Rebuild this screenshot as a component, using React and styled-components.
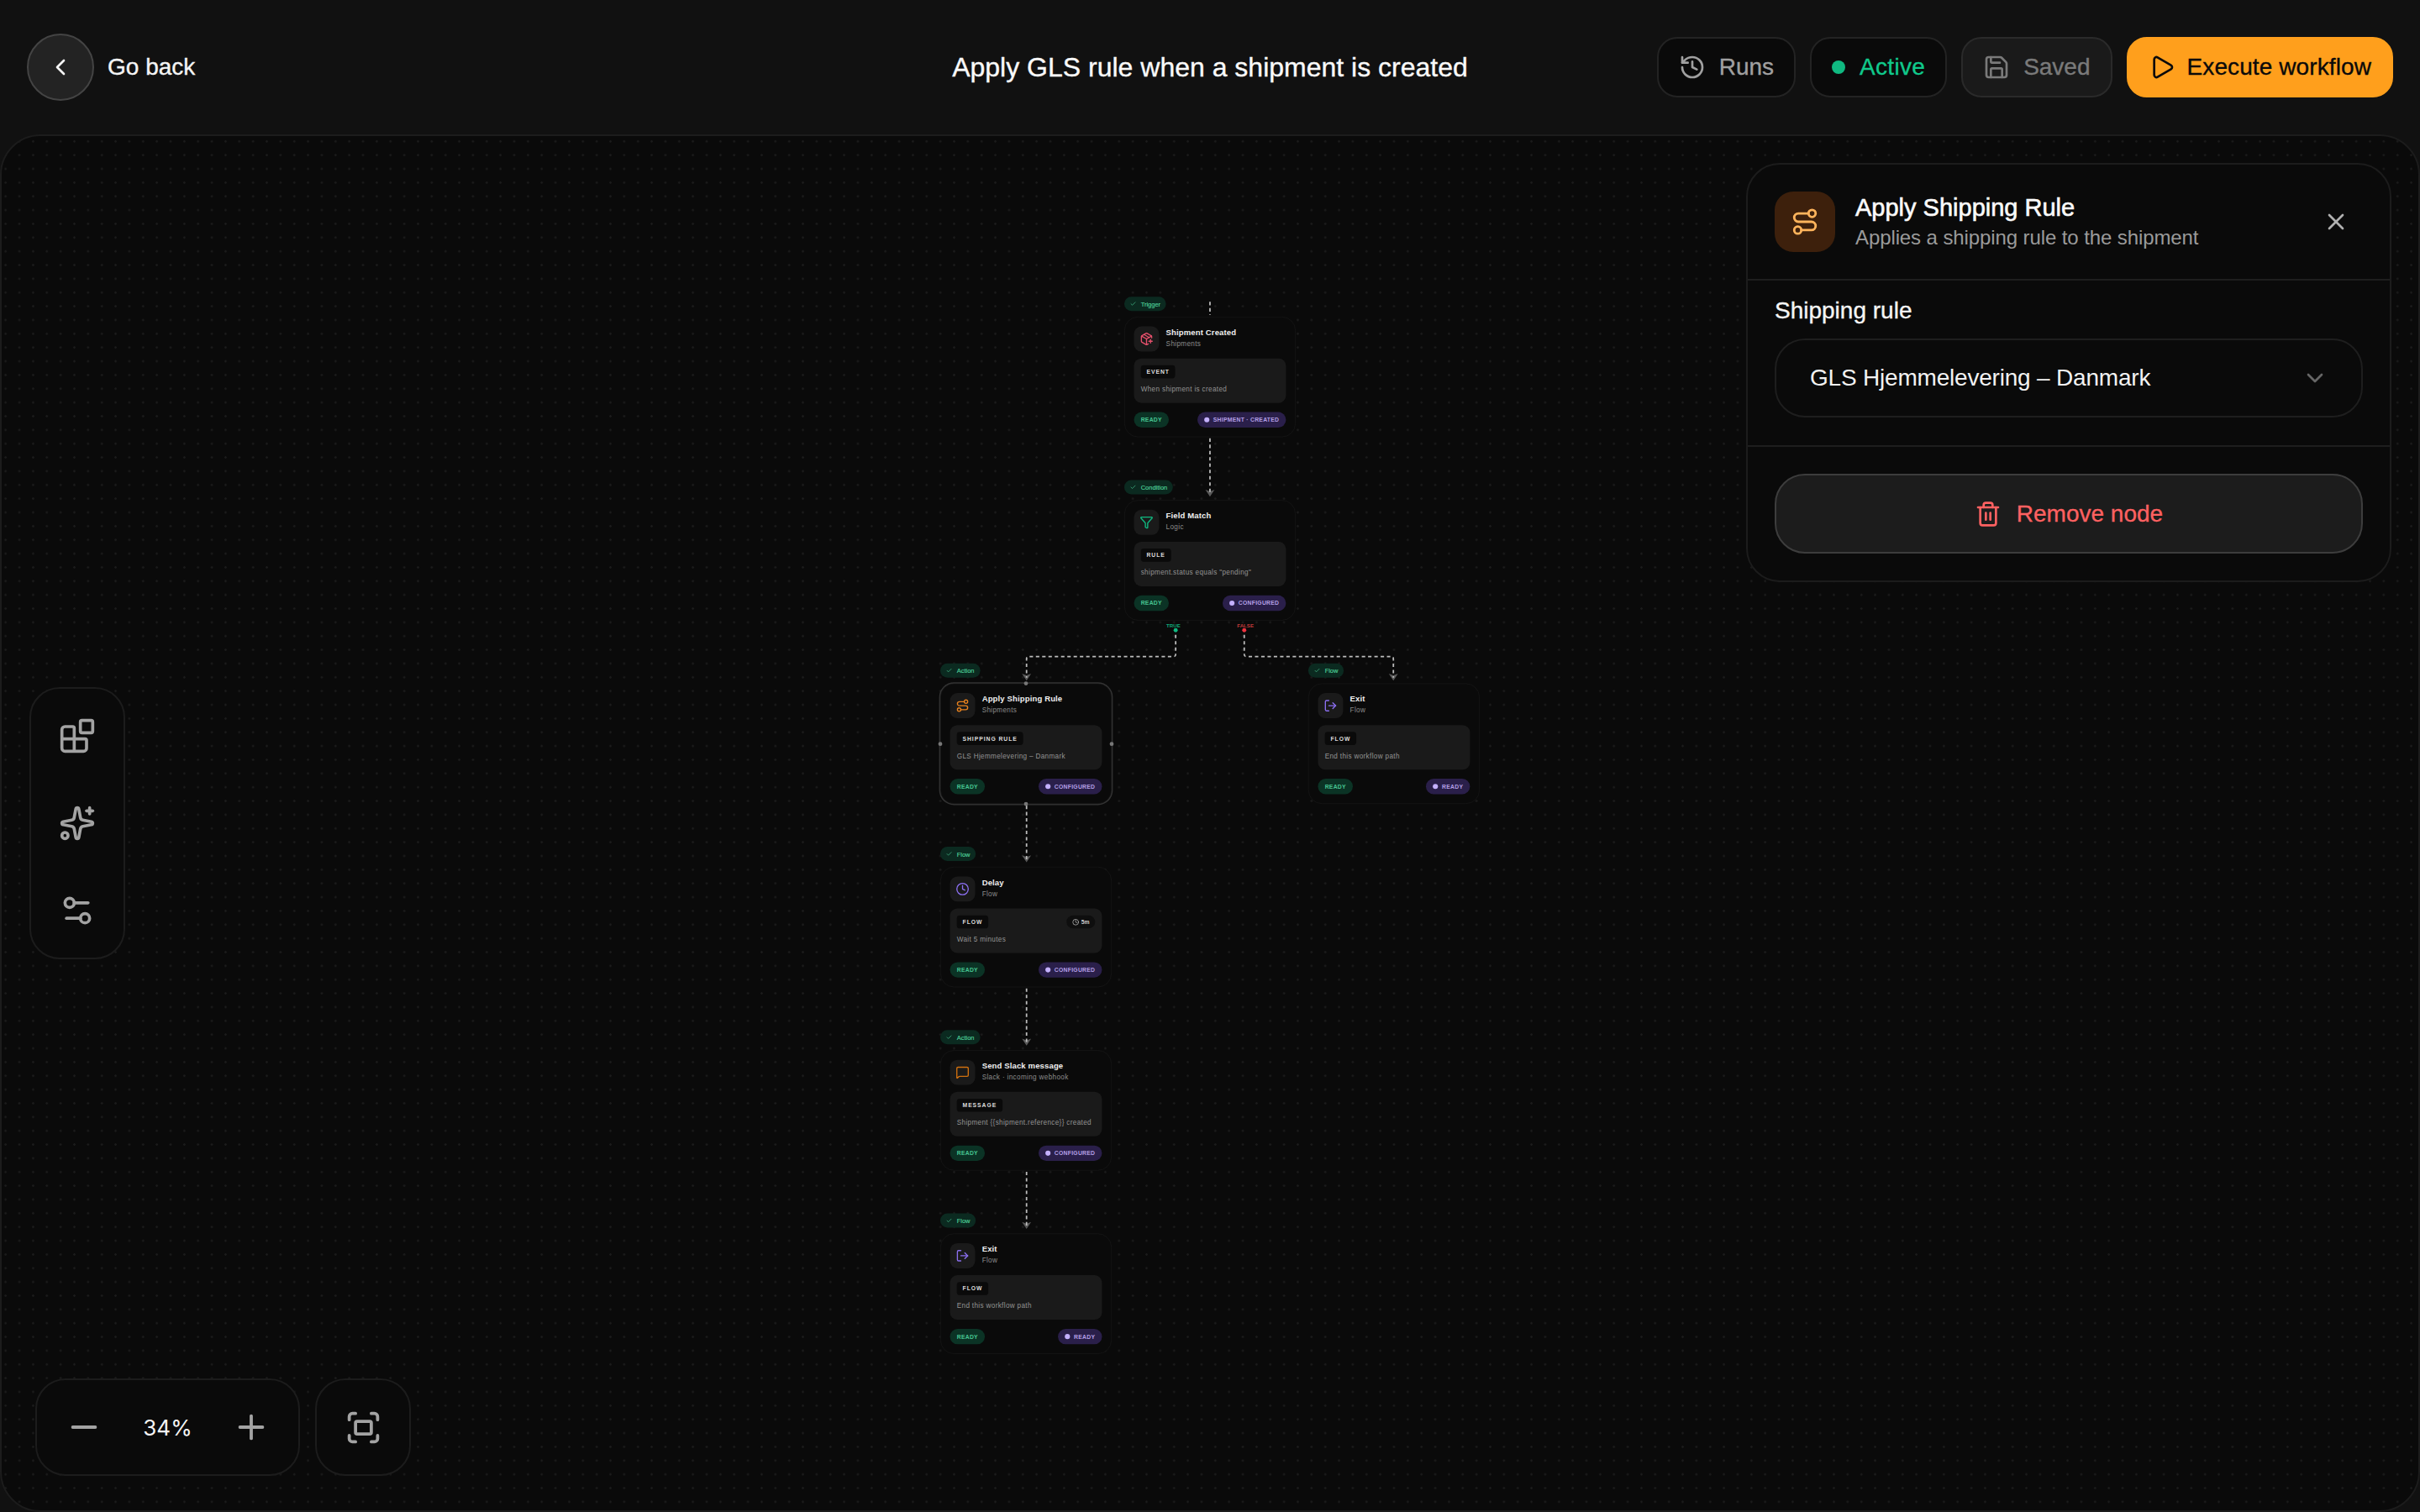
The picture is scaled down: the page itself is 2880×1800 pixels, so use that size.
import React from 'react';
import styled, { createGlobalStyle } from 'styled-components';
import {
  Blocks, Check, ChevronDown, ChevronLeft, Clock, Filter, Fullscreen, History, LogOut,
  MessageSquare, Minus, PackagePlus, Play, Plus, Route, Save, Settings2, Sparkles, Trash2, X,
} from 'lucide-react';

const GlobalStyle = createGlobalStyle`
  html, body, #root {
    margin: 0;
    height: 100%;
    background: #111111;
  }
  body {
    font-family: "Liberation Sans", Arial, sans-serif;
    color: #f5f5f5;
    overflow: hidden;
  }
  * {
    box-sizing: border-box;
  }
`;

const nodes = [
  { id: 'created', x: 322, y: 0, tag: 'Trigger', Icon: PackagePlus, color: '#e5506c', title: 'Shipment Created', sub: 'Shipments', chip: 'EVENT', text: 'When shipment is created', status: 'SHIPMENT · CREATED' },
  { id: 'match', x: 322, y: 321, tag: 'Condition', Icon: Filter, color: '#10b981', title: 'Field Match', sub: 'Logic', chip: 'RULE', text: 'shipment.status equals "pending"', status: 'CONFIGURED' },
  { id: 'apply', x: 0, y: 642, tag: 'Action', Icon: Route, color: '#e8821e', title: 'Apply Shipping Rule', sub: 'Shipments', chip: 'SHIPPING RULE', text: 'GLS Hjemmelevering – Danmark', status: 'CONFIGURED', selected: true },
  { id: 'exit-a', x: 644, y: 642, tag: 'Flow', Icon: LogOut, color: '#8b6ff0', title: 'Exit', sub: 'Flow', chip: 'FLOW', text: 'End this workflow path', status: 'READY' },
  { id: 'delay', x: 0, y: 963, tag: 'Flow', Icon: Clock, color: '#8b6ff0', title: 'Delay', sub: 'Flow', chip: 'FLOW', text: 'Wait 5 minutes', status: 'CONFIGURED', duration: '5m' },
  { id: 'slack', x: 0, y: 1284, tag: 'Action', Icon: MessageSquare, color: '#d0700f', title: 'Send Slack message', sub: 'Slack · incoming webhook', chip: 'MESSAGE', text: 'Shipment {{shipment.reference}} created', status: 'CONFIGURED' },
  { id: 'exit-b', x: 0, y: 1605, tag: 'Flow', Icon: LogOut, color: '#8b6ff0', title: 'Exit', sub: 'Flow', chip: 'FLOW', text: 'End this workflow path', status: 'READY' },
];

const edges = [
  { d: 'M472 -26 V-3' },
  { d: 'M472 213 V310', arrow: [472, 313] },
  { d: 'M412 557 V591 Q412 595 408 595 H155 Q151 595 151 599 V632', arrow: [151, 635] },
  { d: 'M532 557 V591 Q532 595 536 595 H789 Q793 595 793 599 V632', arrow: [793, 635] },
  { d: 'M151 856 V950', arrow: [151, 953] },
  { d: 'M151 1176 V1271', arrow: [151, 1274] },
  { d: 'M151 1497 V1592', arrow: [151, 1595] },
];

const Page = styled.div`
  height: 100vh;
  display: flex;
  flex-direction: column;
`;

const Header = styled.header`
  height: 160px;
  flex-shrink: 0;
  padding: 0 32px;
  display: grid;
  grid-template-columns: 1fr auto 1fr;
  align-items: center;
`;

const BackLink = styled.div`
  display: flex;
  align-items: center;
  gap: 16px;
  font-size: 28px;
  color: #f5f5f5;
  -webkit-text-stroke: 0.35px #f5f5f5;
`;

const BackCircle = styled.button`
  width: 80px;
  height: 80px;
  padding: 0;
  border-radius: 50%;
  border: 2px solid #444444;
  background: #232323;
  color: #f5f5f5;
  display: flex;
  align-items: center;
  justify-content: center;
`;

const PageTitle = styled.h1`
  margin: 0;
  font-size: 32px;
  font-weight: 400;
  color: #fafafa;
  -webkit-text-stroke: 0.35px #fafafa;
`;

const Actions = styled.div`
  display: flex;
  justify-content: flex-end;
  gap: 17px;
`;

const HeaderButton = styled.button`
  height: 72px;
  padding: 0 24px;
  display: flex;
  align-items: center;
  gap: ${(p) => p.$gap || 16}px;
  border-radius: 24px;
  border: 2px solid ${(p) => p.$border || '#232323'};
  background: ${(p) => p.$bg || '#0a0a0a'};
  color: ${(p) => p.$color || '#a0a0a0'};
  font-family: inherit;
  font-size: 28px;
  letter-spacing: ${(p) => p.$spacing || 0}px;
  -webkit-text-stroke: 0.35px ${(p) => p.$color || '#a0a0a0'};
`;

const StatusDot = styled.span`
  width: 16px;
  height: 16px;
  border-radius: 50%;
  background: #10b981;
`;

const Canvas = styled.main`
  flex: 1;
  position: relative;
  overflow: hidden;
  border: 2px solid #1c1c1c;
  border-radius: 48px;
  background-color: #0a0a0a;
  background-image: radial-gradient(circle, #1b1b1b 1.1px, transparent 1.5px);
  background-size: 16.37px 16.37px;
  background-position: -3.5px -1.9px;
`;

const Viewport = styled.div`
  position: absolute;
  left: 1117px;
  top: 214.5px;
  width: 944px;
  height: 1815px;
  transform: scale(0.68);
  transform-origin: 0 0;
`;

const EdgeLayer = styled.svg`
  position: absolute;
  left: 0;
  top: 0;
  overflow: visible;
`;

const EdgeLabel = styled.text`
  font-family: "Liberation Sans", Arial, sans-serif;
  font-size: 9px;
  font-weight: 700;
  text-anchor: middle;
  fill: ${(p) => p.$color};
`;

const NodeCard = styled.article`
  position: absolute;
  left: ${(p) => p.$x}px;
  top: ${(p) => p.$y}px;
  width: 300px;
  padding: 16px;
  display: flex;
  flex-direction: column;
  border: 1px solid #191919;
  border-radius: 24px;
  background: #0a0a0a;
  box-shadow: ${(p) => (p.$selected ? '0 0 0 2px #333333' : 'none')};
`;

const NodeTag = styled.div`
  position: absolute;
  left: -1px;
  top: -36px;
  height: 25px;
  padding: 0 10px;
  display: flex;
  align-items: center;
  gap: 8px;
  border-radius: 13px;
  background: #0b2a20;
  color: #4fd39b;
  font-size: 11px;
  -webkit-text-stroke: 0.2px #4fd39b;
`;

const NodeHead = styled.div`
  display: flex;
  gap: 12px;
  margin-bottom: 12px;
`;

const IconTile = styled.div`
  width: 44px;
  height: 44px;
  flex-shrink: 0;
  display: flex;
  align-items: center;
  justify-content: center;
  border-radius: 13px;
  background: #1a1a1a;
  color: ${(p) => p.$color};
`;

const NodeTitle = styled.div`
  font-size: 14px;
  font-weight: 700;
  line-height: 20px;
  letter-spacing: 0.2px;
  color: #f0f0f0;
`;

const NodeSub = styled.div`
  font-size: 12px;
  line-height: 20px;
  letter-spacing: 0.5px;
  color: #8c8c8c;
`;

const NodeBody = styled.div`
  padding: 12px;
  margin-bottom: 16px;
  border-radius: 13px;
  background: #1a1a1a;
`;

const BodyTop = styled.div`
  display: flex;
  align-items: center;
  justify-content: space-between;
  margin-bottom: 8px;
`;

const Chip = styled.span`
  height: 23px;
  padding: 0 10px;
  display: flex;
  align-items: center;
  border-radius: 5px;
  background: #0a0a0a;
  color: #dddddd;
  font-size: 10px;
  font-weight: 700;
  letter-spacing: 1.4px;
`;

const DurationChip = styled.span`
  height: 23px;
  padding: 0 10px;
  display: flex;
  align-items: center;
  gap: 4px;
  border-radius: 12px;
  background: #0e0e0e;
  color: #cfcfcf;
  font-size: 10px;
  font-weight: 700;
`;

const BodyText = styled.div`
  font-size: 12px;
  line-height: 23px;
  letter-spacing: 0.5px;
  color: #949494;
  white-space: nowrap;
`;

const NodeFoot = styled.div`
  display: flex;
  justify-content: space-between;
`;

const Pill = styled.span`
  height: 27px;
  padding: 0 12px;
  display: flex;
  align-items: center;
  gap: 7px;
  border-radius: 14px;
  background: ${(p) => p.$bg};
  color: ${(p) => p.$color};
  font-size: 10px;
  font-weight: 700;
  letter-spacing: 0.4px;
  white-space: nowrap;
`;

const PillDot = styled.span`
  width: 9px;
  height: 9px;
  border-radius: 50%;
  background: #c4b0ff;
`;

const Handle = styled.span`
  position: absolute;
  width: 7px;
  height: 7px;
  border-radius: 50%;
  background: #777777;
  left: ${(p) => p.$left};
  top: ${(p) => p.$top};
  transform: translate(-50%, -50%);
`;

const Floating = styled.div`
  position: absolute;
  border: 2px solid #1c1c1c;
  background: #0a0a0a;
  border-radius: 36px;
`;

const ToolPalette = styled(Floating)`
  left: 33px;
  top: 656px;
  width: 114px;
  padding: 34px 0;
  display: flex;
  flex-direction: column;
  align-items: center;
  gap: 60px;
  color: #a3a3a3;
`;

const ZoomDock = styled.div`
  position: absolute;
  left: 40px;
  bottom: 41px;
  display: flex;
  gap: 18px;
`;

const ZoomGroup = styled(Floating)`
  position: static;
  width: 315px;
  height: 116px;
  padding: 0 33px;
  display: flex;
  align-items: center;
  justify-content: space-between;
  color: #a3a3a3;
`;

const FitButton = styled(Floating)`
  position: static;
  width: 114px;
  height: 116px;
  display: flex;
  align-items: center;
  justify-content: center;
  color: #a3a3a3;
`;

const ZoomValue = styled.span`
  font-family: Inter, "Liberation Sans", sans-serif;
  font-size: 26px;
  color: #f5f5f5;
`;

const SidePanel = styled(Floating)`
  right: 32px;
  top: 32px;
  width: 768px;
  border-radius: 40px;
`;

const PanelHeader = styled.div`
  padding: 32px;
  display: flex;
  align-items: center;
  gap: 24px;
  border-bottom: 2px solid #1e1e1e;
`;

const PanelIcon = styled.div`
  width: 72px;
  height: 72px;
  flex-shrink: 0;
  display: flex;
  align-items: center;
  justify-content: center;
  border-radius: 22px;
  background: #3d200c;
  color: #ffb45c;
`;

const PanelHeading = styled.div`
  flex: 1;
`;

const PanelTitle = styled.div`
  font-size: 29px;
  line-height: 38px;
  color: #fafafa;
  -webkit-text-stroke: 0.6px #fafafa;
`;

const PanelSub = styled.div`
  font-size: 24px;
  line-height: 34px;
  letter-spacing: -0.1px;
  color: #9a9a9a;
`;

const CloseButton = styled.button`
  padding: 0;
  margin-right: 16px;
  border: none;
  background: none;
  color: #b0b0b0;
  display: flex;
`;

const PanelSection = styled.div`
  padding: 18px 32px 33px;
  border-bottom: 2px solid #1e1e1e;
`;

const FieldLabel = styled.div`
  font-size: 28px;
  line-height: 36px;
  margin-bottom: 15px;
  color: #f5f5f5;
  -webkit-text-stroke: 0.35px #f5f5f5;
`;

const SelectBox = styled.div`
  height: 94px;
  padding: 0 39px 0 40px;
  display: flex;
  align-items: center;
  justify-content: space-between;
  border: 2px solid #1e1e1e;
  border-radius: 36px;
  font-size: 28px;
  letter-spacing: -0.2px;
  color: #f2f2f2;
  svg {
    color: #666666;
  }
`;

const RemoveSection = styled.div`
  padding: 32px;
`;

const RemoveButton = styled.button`
  width: 100%;
  height: 95px;
  display: flex;
  align-items: center;
  justify-content: center;
  gap: 18px;
  border: 2px solid #3d3d3d;
  border-radius: 36px;
  background: #1c1c1c;
  color: #ff6161;
  font-family: inherit;
  font-size: 28px;
  -webkit-text-stroke: 0.3px #ff6161;
`;

const FlowNode = ({ node }) => {
  const { Icon } = node;
  return (
    <NodeCard $x={node.x} $y={node.y} $selected={node.selected}>
      <NodeTag>
        <Check size={11} strokeWidth={2} />
        {node.tag}
      </NodeTag>
      <NodeHead>
        <IconTile $color={node.color}>
          <Icon size={24} strokeWidth={2} />
        </IconTile>
        <div>
          <NodeTitle>{node.title}</NodeTitle>
          <NodeSub>{node.sub}</NodeSub>
        </div>
      </NodeHead>
      <NodeBody>
        <BodyTop>
          <Chip>{node.chip}</Chip>
          {node.duration && (
            <DurationChip>
              <Clock size={12} strokeWidth={2} />
              {node.duration}
            </DurationChip>
          )}
        </BodyTop>
        <BodyText>{node.text}</BodyText>
      </NodeBody>
      <NodeFoot>
        <Pill $bg="#0b3325" $color="#46c592">READY</Pill>
        <Pill $bg="#2a1f4a" $color="#b49fe6">
          <PillDot />
          {node.status}
        </Pill>
      </NodeFoot>
      {node.selected && (
        <>
          <Handle $left="50%" $top="-1px" />
          <Handle $left="50%" $top="calc(100% + 1px)" />
          <Handle $left="-1px" $top="50%" />
          <Handle $left="calc(100% + 1px)" $top="50%" />
        </>
      )}
    </NodeCard>
  );
};

const FlowEdges = () => (
  <EdgeLayer width="944" height="1815" fill="none">
    {edges.map((edge) => (
      <g key={edge.d}>
        {edge.arrow && (
          <polygon
            points={`${edge.arrow[0] - 8},${edge.arrow[1] - 10} ${edge.arrow[0]},${edge.arrow[1] - 7} ${edge.arrow[0] + 8},${edge.arrow[1] - 10} ${edge.arrow[0]},${edge.arrow[1] + 2}`}
            fill="#5a5a5a"
          />
        )}
        <path d={edge.d} stroke="#bdbdbd" strokeWidth="2.6" strokeDasharray="6 5" />
      </g>
    ))}
    <circle cx="412" cy="549" r="3.6" fill="#10b981" />
    <circle cx="532" cy="549" r="3.6" fill="#ef3340" />
    <EdgeLabel x="408" y="544" $color="#10a878">TRUE</EdgeLabel>
    <EdgeLabel x="534" y="544" $color="#c23b3b">FALSE</EdgeLabel>
  </EdgeLayer>
);

const App = () => (
  <Page>
    <GlobalStyle />
    <Header>
      <BackLink>
        <BackCircle>
          <ChevronLeft size={32} />
        </BackCircle>
        Go back
      </BackLink>
      <PageTitle>Apply GLS rule when a shipment is created</PageTitle>
      <Actions>
        <HeaderButton>
          <History size={32} />
          Runs
        </HeaderButton>
        <HeaderButton $color="#10c98c" $gap={17} $spacing={0.3}>
          <StatusDot />
          Active
        </HeaderButton>
        <HeaderButton $bg="#1a1a1a" $border="#2a2a2a" $color="#7a7a7a">
          <Save size={32} />
          Saved
        </HeaderButton>
        <HeaderButton $bg="#ff9f1c" $border="#ff9f1c" $color="#0a0a0a" $gap={14} $spacing={0.1}>
          <Play size={32} />
          Execute workflow
        </HeaderButton>
      </Actions>
    </Header>
    <Canvas>
      <Viewport>
        <FlowEdges />
        {nodes.map((node) => (
          <FlowNode key={node.id} node={node} />
        ))}
      </Viewport>
      <ToolPalette>
        <Blocks size={44} />
        <Sparkles size={44} />
        <Settings2 size={44} />
      </ToolPalette>
      <ZoomDock>
        <ZoomGroup>
          <Minus size={46} />
          <ZoomValue>34%</ZoomValue>
          <Plus size={46} />
        </ZoomGroup>
        <FitButton>
          <Fullscreen size={45} />
        </FitButton>
      </ZoomDock>
      <SidePanel>
        <PanelHeader>
          <PanelIcon>
            <Route size={34} />
          </PanelIcon>
          <PanelHeading>
            <PanelTitle>Apply Shipping Rule</PanelTitle>
            <PanelSub>Applies a shipping rule to the shipment</PanelSub>
          </PanelHeading>
          <CloseButton>
            <X size={32} />
          </CloseButton>
        </PanelHeader>
        <PanelSection>
          <FieldLabel>Shipping rule</FieldLabel>
          <SelectBox>
            GLS Hjemmelevering – Danmark
            <ChevronDown size={32} />
          </SelectBox>
        </PanelSection>
        <RemoveSection>
          <RemoveButton>
            <Trash2 size={32} />
            Remove node
          </RemoveButton>
        </RemoveSection>
      </SidePanel>
    </Canvas>
  </Page>
);

export default App;
